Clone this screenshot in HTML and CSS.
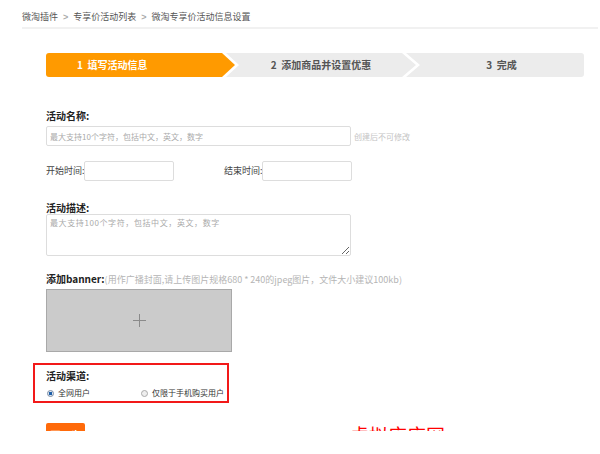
FILE: index.html
```html
<!DOCTYPE html>
<html>
<head>
    <title>微淘专享价活动信息设置</title>
    <link rel="stylesheet" href="styles.css">
</head>
<body>
    <div class="page">
        <div class="crumbs">
            <span>微淘插件</span><span class="sep">&gt;</span><span>专享价活动列表</span><span class="sep">&gt;</span><span>微淘专享价活动信息设置</span>
        </div>

        <div class="form">
            <div class="steps">
                <div class="step step-first active">1&nbsp; 填写活动信息</div>
                <div class="step step-mid">2&nbsp; 添加商品并设置优惠</div>
                <div class="step step-last">3&nbsp; 完成</div>
            </div>

            <div class="label label-name">活动名称:</div>
            <div class="row">
                <input type="text" class="input input-name" placeholder="最大支持10个字符，包括中文，英文，数字">
                <span class="hint">创建后不可修改</span>
            </div>

            <div class="row row-time">
                <span class="time-label">开始时间:</span>
                <input type="text" class="input input-time">
                <span class="time-label time-end">结束时间:</span>
                <input type="text" class="input input-time">
            </div>

            <div class="label label-desc">活动描述:</div>
            <textarea class="desc" placeholder="最大支持100个字符，包括中文，英文，数字"></textarea>

            <div class="label label-banner">添加banner:<span class="note">(用作广播封面,请上传图片规格680 * 240的jpeg图片，文件大小建议100kb)</span></div>
            <div class="upload">
                <svg width="13" height="13" viewBox="0 0 13 13">
                    <path d="M6.5 0v13M0 6.5h13" stroke="#8a8a8a" stroke-width="1"/>
                </svg>
            </div>

            <div class="channel">
                <div class="label">活动渠道:</div>
                <div class="radios">
                    <label class="radio"><span class="dot checked"></span>全网用户</label>
                    <label class="radio radio-mobile"><span class="dot"></span>仅限于手机购买用户</label>
                </div>
            </div>

            <div class="footer">
                <button class="next">下一步</button>
                <span class="mark">虚拟店店网</span>
            </div>
        </div>
    </div>
</body>
</html>
```

FILE: styles.css
```css
body {
    margin: 0;
    background: #fff;
    font-family: "Noto Sans CJK SC", "Liberation Sans", sans-serif;
    color: #333;
}
.page {
    height: 431px;
    overflow: hidden;
    padding-left: 22px;
}
.crumbs {
    height: 12px;
    padding: 11px 0 4px;
    margin-right: 2px;
    font-size: 9px;
    line-height: 12px;
    color: #555;
    border-bottom: 2px solid #f1f1f1;
}
.crumbs .sep {
    display: inline-block;
    margin: 0 5px;
    color: #aaa;
    font-family: "Liberation Sans", sans-serif;
    font-weight: bold;
}
.form {
    padding-left: 24px;
}
.steps {
    display: flex;
    width: 538px;
    height: 24px;
    margin-top: 24px;
}
.step {
    height: 24px;
    line-height: 24px;
    font-size: 10px;
    font-weight: bold;
    color: #555;
    background: #ececec;
    text-align: center;
    white-space: nowrap;
}
.step-first {
    width: 189px;
    padding-left: 31px;
    box-sizing: border-box;
    text-align: left;
    border-radius: 3px 0 0 3px;
    clip-path: polygon(0 0, calc(100% - 13px) 0, 100% 50%, calc(100% - 13px) 100%, 0 100%);
}
.step-mid {
    width: 190px;
    margin-left: -9px;
    clip-path: polygon(0 0, calc(100% - 14px) 0, 100% 50%, calc(100% - 14px) 100%, 0 100%, 13px 50%);
}
.step-last {
    flex: 1;
    margin-left: -10px;
    padding-left: 13px;
    border-radius: 0 3px 3px 0;
    clip-path: polygon(0 0, 100% 0, 100% 100%, 0 100%, 14px 50%);
}
.step.active {
    background: #ff9a00;
    color: #fff;
}
.label {
    height: 12px;
    font-size: 10px;
    line-height: 12px;
    font-weight: bold;
    color: #222;
    white-space: nowrap;
}
.label-name {
    margin-top: 33px;
}
.row {
    display: flex;
    align-items: center;
    height: 20px;
    margin-top: 4px;
}
.input {
    box-sizing: border-box;
    height: 20px;
    padding: 0 3px;
    border: 1px solid #ddd;
    border-radius: 2px;
    font-family: inherit;
    font-size: 8px;
    outline: none;
}
.input::placeholder,
.desc::placeholder {
    color: #aaa;
}
.input-name {
    width: 305px;
}
.hint {
    margin-left: 3px;
    font-size: 8px;
    color: #c4c4c4;
    white-space: nowrap;
}
.row-time {
    margin-top: 15px;
    font-size: 9px;
    line-height: 12px;
    color: #444;
}
.time-label {
    width: 38px;
    white-space: nowrap;
}
.time-end {
    margin-left: 50px;
}
.input-time {
    width: 90px;
}
.label-desc {
    margin-top: 21px;
}
.desc {
    display: block;
    box-sizing: border-box;
    width: 305px;
    height: 42px;
    margin: 0;
    padding: 2px 3px;
    border: 1px solid #ddd;
    border-radius: 2px;
    font-family: inherit;
    font-size: 8px;
    letter-spacing: 0.6px;
    outline: none;
}
.label-banner {
    margin-top: 17px;
}
.note {
    font-weight: normal;
    font-size: 9px;
    color: #b5b5b5;
}
.upload {
    display: flex;
    align-items: center;
    justify-content: center;
    box-sizing: border-box;
    width: 186px;
    height: 63px;
    margin-top: 4px;
    background: #cbcbcb;
    border: 1px solid #a9a9a9;
}
.channel {
    box-sizing: border-box;
    width: 196px;
    height: 40px;
    margin: 11px 0 0 -13px;
    padding: 5px 0 0 11px;
    border: 2px solid #f21919;
}
.radios {
    display: flex;
    align-items: center;
    height: 12px;
    margin-top: 5px;
    font-size: 8px;
    line-height: 12px;
    color: #333;
}
.radio {
    display: flex;
    align-items: center;
}
.radio-mobile {
    margin-left: 50px;
}
.dot {
    box-sizing: border-box;
    width: 7px;
    height: 7px;
    margin: 0 4px 0 1px;
    border-radius: 50%;
    border: 1px solid #aaa;
    background: #eee;
}
.dot.checked {
    border-color: #7a8ca5;
    background: radial-gradient(circle, #1d5fa8 0 1.6px, #dfe6ef 2px);
}
.footer {
    display: flex;
    align-items: flex-start;
    margin-top: 20px;
}
.next {
    width: 39px;
    height: 22px;
    padding: 0;
    border: none;
    border-radius: 2px;
    background: #ff6a0a;
    color: #fff;
    font-family: inherit;
    font-size: 10px;
    font-weight: bold;
}
.mark {
    margin: 0 0 0 265px;
    font-size: 19px;
    line-height: 19px;
    padding-top: 2px;
    color: #ff0000;
    white-space: nowrap;
}
```
